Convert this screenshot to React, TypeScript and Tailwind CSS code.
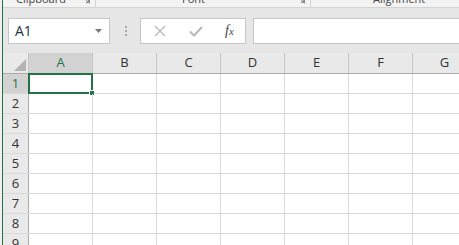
import React from "react";

const columns = ["A", "B", "C", "D", "E", "F", "G"];
const rows = [1, 2, 3, 4, 5, 6, 7, 8, 9];

function Launcher() {
  return (
    <svg width="7" height="7" viewBox="0 0 7 7" className="shrink-0">
      <path d="M0.5 0.5h6v6" fill="none" stroke="#8a8a8a" strokeWidth="1" />
      <path d="M2 2l3.5 3.5M5.5 3v2.5H3" fill="none" stroke="#8a8a8a" strokeWidth="1" />
    </svg>
  );
}

export default function App() {
  return (
    <div
      className="flex h-[245px] w-[459px] overflow-hidden bg-[#f0f0f0] pl-[2px] text-[#262626]"
      style={{ fontFamily: '"Open Sans", "Liberation Sans", sans-serif' }}
    >
      <div className="flex min-w-0 flex-1 flex-col border-l border-[#217346]">
        {/* ribbon group labels, cut off at the top */}
        <div className="flex h-[8px] shrink-0 overflow-hidden border-b border-[#d4d4d4] bg-[#f3f3f3] text-[11px] leading-[11px] text-[#444]">
          <div className="flex w-[93px] shrink-0 items-start border-r border-[#d4d4d4] pl-[13px] pr-[5px]">
            <span className="-mt-[7px]">Clipboard</span>
            <span className="-mt-[3px] ml-auto">
              <Launcher />
            </span>
          </div>
          <div className="flex w-[215px] shrink-0 items-start border-r border-[#d4d4d4] pl-[86px] pr-[5px]">
            <span className="-mt-[7px]">Font</span>
            <span className="-mt-[3px] ml-auto">
              <Launcher />
            </span>
          </div>
          <div className="flex flex-1 items-start pl-[62px]">
            <span className="-mt-[7px]">Alignment</span>
          </div>
        </div>

        {/* formula bar */}
        <div className="flex h-[45px] shrink-0 items-start bg-[#e6e6e6] pt-[10px]">
          <div className="ml-[5px] flex h-[26px] w-[102px] shrink-0 items-center border border-[#c6c6c6] bg-white pl-[6px] pr-[7px]">
            <span className="text-[14px] leading-none text-[#1f2f45]">A1</span>
            <svg width="7" height="4" viewBox="0 0 7 4" className="ml-auto">
              <path d="M0 0h7L3.5 4z" fill="#7a7a7a" />
            </svg>
          </div>
          <div className="flex h-[26px] w-[30px] shrink-0 flex-col items-center justify-center gap-[2px] pl-[1px]">
            <span className="h-[2px] w-[2px] bg-[#a8a8a8]" />
            <span className="h-[2px] w-[2px] bg-[#a8a8a8]" />
            <span className="h-[2px] w-[2px] bg-[#a8a8a8]" />
          </div>
          <div className="flex h-[26px] w-[106px] shrink-0 items-center border border-[#c6c6c6] bg-white">
            <svg width="12" height="12" viewBox="0 0 12 12" className="ml-[13px]">
              <path d="M1 1l10 10M11 1L1 11" stroke="#b8b8b8" strokeWidth="1.3" fill="none" />
            </svg>
            <svg width="14" height="11" viewBox="0 0 14 11" className="ml-[23px]">
              <path d="M1 5.5l4 4L13 1" stroke="#b8b8b8" strokeWidth="2" fill="none" />
            </svg>
            <span
              className="ml-[22px] text-[14px] italic leading-none text-[#444]"
              style={{ fontFamily: '"Liberation Serif", serif' }}
            >
              f<span className="text-[11px]">x</span>
            </span>
          </div>
          <div className="ml-[7px] h-[26px] flex-1 border border-r-0 border-[#c6c6c6] bg-white" />
        </div>

        {/* sheet grid */}
        <div className="flex flex-1 flex-col bg-white text-[13px]">
          <div className="flex h-[21px] shrink-0 border-b border-[#ababab] bg-[#e9e9e9]">
            <div className="relative w-[26px] shrink-0 border-r border-[#c6c6c6]">
              <svg width="12" height="12" viewBox="0 0 12 12" className="absolute bottom-[2px] right-[2px]">
                <path d="M12 0v12H0z" fill="#b4b4b4" />
              </svg>
            </div>
            {columns.map((c) => (
              <div
                key={c}
                className={`flex w-[64px] shrink-0 items-center justify-center border-r border-[#c6c6c6] ${
                  c === "A" ? "bg-[#d2d2d2] text-[#217346]" : "text-[#333]"
                }`}
              >
                {c}
              </div>
            ))}
          </div>
          {rows.map((r) => (
            <div key={r} className="flex h-[20px] shrink-0 border-b border-[#d9d9d9]">
              <div
                className={`flex w-[26px] shrink-0 items-center justify-center border-r border-[#ababab] ${
                  r === 1 ? "bg-[#d2d2d2] text-[#217346]" : "bg-[#e9e9e9] text-[#333]"
                }`}
              >
                {r}
              </div>
              {columns.map((c) => (
                <div key={c} className="relative w-[64px] shrink-0 border-r border-[#d9d9d9]">
                  {r === 1 && c === "A" ? (
                    <div className="absolute -left-[1px] -top-[1px] h-[21px] w-[65px] border-2 border-[#217346]">
                      <span className="absolute -bottom-[4px] -right-[4px] h-[6px] w-[6px] border border-white bg-[#217346]" />
                    </div>
                  ) : null}
                </div>
              ))}
            </div>
          ))}
        </div>
      </div>
    </div>
  );
}
